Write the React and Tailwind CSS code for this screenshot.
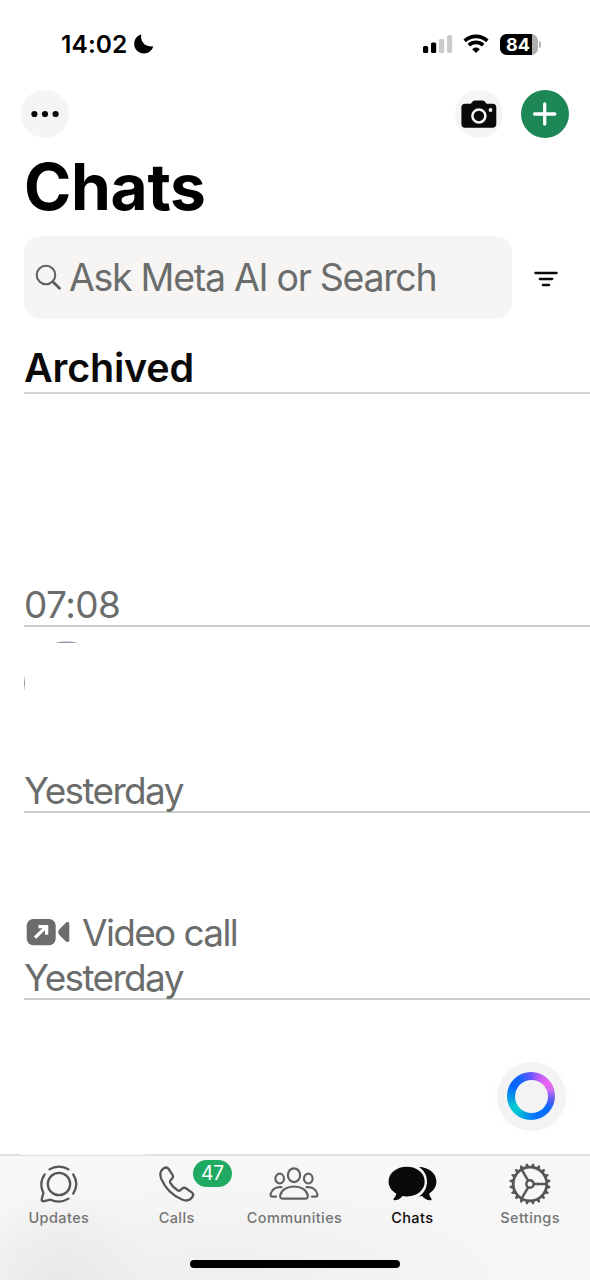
import React from "react";

function StatusBar() {
  return (
    <div className="flex h-[90px] shrink-0 items-start justify-between pl-[61px] pr-[49px] pt-[32px]">
      <div className="flex h-[24px] items-center">
        <span className="w-[73px] whitespace-nowrap text-[24.5px] font-semibold leading-[24px] tracking-[0.1px] text-black">14:02</span>
        <svg width="20" height="20" viewBox="0 0 20 20" aria-hidden="true">
          <path d="M7.2.5C6.3 6.8 9.8 13 19.3 12.6C17.8 17 14.3 19.5 10 19.5C4.4 19.5.2 15.4.2 9.8C.2 5.4 3 1.5 7.2.5Z" fill="#000" />
        </svg>
      </div>
      <div className="flex h-[24px] items-center">
        <svg width="30" height="20" viewBox="0 0 30 20" aria-hidden="true">
          <rect x="0" y="12" width="5.2" height="7" rx="1.5" />
          <rect x="8" y="8.6" width="5.2" height="10.4" rx="1.5" />
          <rect x="16" y="4.8" width="5.2" height="14.2" rx="1.5" fill="#cbcbcb" />
          <rect x="24" y="1" width="5.2" height="18" rx="1.5" fill="#cbcbcb" />
        </svg>
        <svg className="ml-[10px]" width="26" height="20" viewBox="0 0 26 20" fill="none" stroke="#000" aria-hidden="true">
          <path d="M1.7 6.8C8.2.9 17.8.9 24.3 6.8" strokeWidth="3.6" />
          <path d="M5.8 11.2C10 7.4 16 7.4 20.2 11.2" strokeWidth="3.6" />
          <path d="M9.2 15.2C11.3 13 14.7 13 16.8 15.2L13 19Z" fill="#000" stroke="none" />
        </svg>
        <div className="ml-[11px] flex h-[21px] w-[38px] items-center overflow-hidden rounded-[6.5px] bg-linear-to-r from-black from-84% to-[#aeaeae] to-84%">
          <span className="w-[36px] text-center text-[18px] font-bold leading-[21px] text-white">84</span>
        </div>
        <div className="ml-px h-[7px] w-[2px] rounded-r-full bg-[#b5b5b5]" />
      </div>
    </div>
  );
}

function Toolbar() {
  return (
    <div className="flex h-[48px] shrink-0 items-center justify-between pl-[21px] pr-[21px]">
      <button className="flex size-[48px] items-center justify-center rounded-full bg-[#f6f5f4]" aria-label="More">
        <svg width="28" height="8" viewBox="0 0 28 8">
          <circle cx="3.4" cy="4" r="3.1" fill="#0a0a0a" />
          <circle cx="14" cy="4" r="3.1" fill="#0a0a0a" />
          <circle cx="24.6" cy="4" r="3.1" fill="#0a0a0a" />
        </svg>
      </button>
      <div className="flex gap-[18px]">
        <button className="flex size-[48px] items-center justify-center rounded-full bg-[#f6f5f4]" aria-label="Camera">
          <svg width="36" height="28" viewBox="0 0 36 28">
            <path d="M4 3.7H9.2C10.8 3.7 11.2.4 14 .4H21.5C24.3.4 24.7 3.7 26.3 3.7H31.5C34 3.7 35.3 5 35.3 7.3V24C35.3 26.4 34 27.7 31.5 27.7H4C1.7 27.7.4 26.4.4 24V7.3C.4 5 1.7 3.7 4 3.7Z" fill="#0a0a0a" />
            <circle cx="17.9" cy="15.9" r="6.5" fill="none" stroke="#f6f5f4" strokeWidth="2.5" />
            <circle cx="29.5" cy="10" r="1.9" fill="#f6f5f4" />
          </svg>
        </button>
        <button className="flex size-[48px] items-center justify-center rounded-full bg-[#1d8856]" aria-label="New chat">
          <svg width="26" height="26" viewBox="0 0 26 26" stroke="#fff" strokeWidth="3.3" strokeLinecap="round">
            <path d="M12.7 2.9V23.1M2.6 13H22.8" />
          </svg>
        </button>
      </div>
    </div>
  );
}

function SearchRow() {
  return (
    <div className="mt-[15px] flex h-[83px] shrink-0 items-center">
      <div className="flex h-[83px] w-[488px] items-center rounded-[16px] bg-[#f6f5f4] pl-[11px]">
        <svg width="27" height="27" viewBox="0 0 27 27" fill="none" stroke="#5b5e5d" aria-hidden="true">
          <circle cx="11" cy="11" r="9.3" strokeWidth="2" />
          <path d="M17.8 17.8L24.5 24.2" strokeWidth="2.8" strokeLinecap="round" />
        </svg>
        <span className="ml-[7px] whitespace-nowrap text-[37.5px] leading-[46px] tracking-[-1.3px] text-[#6b6d6c]">Ask Meta AI or Search</span>
      </div>
      <svg className="ml-[22px] mt-[3px]" width="24" height="16" viewBox="0 0 24 16" stroke="#0a0a0a" strokeWidth="2.3" strokeLinecap="round" aria-hidden="true">
        <path d="M1.4 2H22.6M5.8 8H18.2M8.9 14H15.1" />
      </svg>
    </div>
  );
}

function UpdatesIcon() {
  return (
    <svg width="38" height="38" viewBox="0 0 38 38" fill="none" stroke="#555756" strokeWidth="2.3" strokeLinecap="round" strokeLinejoin="round">
      <circle cx="19" cy="19" r="11.2" />
      <path d="M9.5 4.4C15 .7 23 .7 28.5 4.4M33.2 9.4C37.1 15.4 37.1 22.6 33.2 28.6M28.5 33.6C22.5 37.4 16.5 37.4 10.5 34.7L4.2 36.2C2.5 36.6 1.4 35.6 1.8 33.9L3.4 28C.5 22 .8 15 4.7 9.4" />
    </svg>
  );
}

function CallsIcon() {
  return (
    <svg width="36" height="36" viewBox="0 0 36 36" fill="none" stroke="#555756" strokeWidth="2.3" strokeLinejoin="round">
      <path d="M4.6 2.4C6.6 1 8.3 1.2 9.6 3L13.5 8.8C14.4 10.2 14.2 11.3 13.1 12.6L11.6 14.3C10.9 15.1 10.8 15.8 11.3 16.8C13.1 19.8 15.9 22.7 18.9 24.5C19.9 25 20.6 24.9 21.4 24.2L23.1 22.7C24.4 21.6 25.6 21.5 26.9 22.3L32.7 26.4C34.4 27.6 34.6 29 33.5 30.7C31.2 34.3 27.6 35.4 23 33.5C13.9 29.7 6 21.8 2.2 12.6C.5 8 1.5 4.6 4.6 2.4Z" />
    </svg>
  );
}

function CommunitiesIcon() {
  return (
    <svg width="50" height="34" viewBox="0 0 50 34" fill="none" stroke="#606261" strokeWidth="2.2" strokeLinejoin="round" strokeLinecap="round">
      <ellipse cx="25" cy="8.2" rx="6.1" ry="6.9" />
      <ellipse cx="10.7" cy="11.6" rx="4.3" ry="4.9" />
      <ellipse cx="39.3" cy="11.6" rx="4.3" ry="4.9" />
      <path d="M14 31.7C11.8 31.7 10.9 30.6 11.2 28.5C12.2 23 17.9 19.5 25 19.5S37.8 23 38.8 28.5C39.1 30.6 38.2 31.7 36 31.7Z" />
      <path d="M7 29.7H3.6C2 29.7 1.3 28.8 1.6 27.2C2.7 22.5 7 19.5 12.4 20.2M43 29.7H46.4C48 29.7 48.7 28.8 48.4 27.2C47.3 22.5 43 19.5 37.6 20.2" />
    </svg>
  );
}

function ChatsIcon() {
  return (
    <svg width="49" height="36" viewBox="0 0 49 36" fill="#0a0a0a">
      <path d="M18.8.8C29 .8 36.7 7 36.7 15.6C36.7 24.4 29 30.4 19.2 30.4C17.4 30.4 16 30.2 14.6 29.9C12.5 32.5 9.5 34.3 6.6 34.3C5.2 34.3 5 33.2 5.9 32.3C7.4 30.7 8.1 29.3 8.2 27.5C3.6 25 .6 20.8.6 15.6C.6 7 8.6.8 18.8.8Z" />
      <path d="M30.8.9C41 1.2 48.4 7.1 48.4 15.6C48.4 20.6 45.8 24.8 41.3 27.5C41.3 29.3 41.9 30.7 43.2 32.2C44 33.2 43.7 34.3 42.2 34.3C39 34.3 36.2 32.7 34 30.1C33 30.4 31.9 30.5 30.8 30.5C36 27.4 39 22 39 15.6C39 9.3 36 4 30.8.9Z" />
    </svg>
  );
}

const TEETH = Array.from({ length: 20 }, (_, i) => i * 18);

function SettingsIcon() {
  return (
    <svg width="42" height="42" viewBox="0 0 42 42" fill="none" stroke="#555756">
      <circle cx="21" cy="21" r="16.8" strokeWidth="2.8" />
      <circle cx="21" cy="21" r="3.7" strokeWidth="2.4" />
      <path d="M25 21H37M19 17.4L12.7 6.6M19 24.6L12.7 35.4" strokeWidth="2.5" />
      {TEETH.map((angle) => (
        <path key={angle} d="M19 4L20 .8Q21 -.4 22 .8L23 4Z" fill="#555756" stroke="none" transform={`rotate(${angle + 9} 21 21)`} />
      ))}
    </svg>
  );
}

function Tab({ label, icon, active, badge }) {
  return (
    <div className="relative flex flex-1 flex-col items-center">
      <div className="flex h-[42px] items-center justify-center">{icon}</div>
      <span className={`mt-[3px] whitespace-nowrap text-[14.5px] font-medium leading-[20px] tracking-[0.4px] ${active ? "text-[#0a0a0a]" : "text-[#737574]"}`}>{label}</span>
      {badge && (
        <span className="absolute left-[75px] top-[-3px] flex h-[27px] w-[39px] items-center justify-center rounded-full bg-[#20aa61] text-[19.5px] leading-[27px] tracking-[-0.4px] text-white">{badge}</span>
      )}
    </div>
  );
}

export default function App() {
  return (
    <div className="relative flex h-[1280px] w-[590px] flex-col overflow-hidden bg-white font-['Inter',sans-serif]">
      <StatusBar />
      <Toolbar />
      <main className="flex flex-1 flex-col pl-[24px]">
        <h1 className="mt-[11px] h-[72px] whitespace-nowrap text-[64px] font-bold leading-[75px] tracking-[-0.3px] text-black">Chats</h1>
        <SearchRow />
        <section className="flex h-[75px] flex-col justify-end border-b-2 border-[#d6d6d6]">
          <h2 className="whitespace-nowrap text-[39.5px] font-semibold leading-[48px] tracking-[-0.2px] text-[#0a0a0a]">Archived</h2>
        </section>
        <section className="flex h-[233px] flex-col justify-end border-b-2 border-[#cdcdcd] text-[37px] leading-[45px] text-[#6b6d6c]">
          <span className="-mb-[2px] tracking-[-0.55px]">07:08</span>
        </section>
        <section className="flex h-[186px] flex-col justify-between border-b-2 border-[#cdcdcd] text-[37px] leading-[45px] text-[#6b6d6c]">
          <svg width="84" height="80" viewBox="0 0 84 80" fill="none" aria-hidden="true">
            <path d="M31 16Q42 13.2 54 16Z" fill="#9295a6" />
            <path d="M0 48Q1.4 56 0 65Z" fill="#555866" />
          </svg>
          <span className="-mb-[2px] tracking-[-1.65px]">Yesterday</span>
        </section>
        <section className="flex h-[187px] flex-col justify-end border-b-2 border-[#cdcdcd] text-[37px] leading-[45px] text-[#6b6d6c]">
          <div className="flex items-center">
            <svg className="mb-[2px] ml-[2px]" width="46" height="28" viewBox="0 0 46 28" aria-hidden="true">
              <rect x=".7" y="1" width="29" height="26.2" rx="6.5" fill="#6b6d6c" />
              <path d="M9 19.6L19.7 9.4M12.4 8.6H20.6V16.8" fill="none" stroke="#fff" strokeWidth="3.3" />
              <path d="M33.2 11.4L39.4 5.2C41 3.4 43.3 3.7 43.3 6V22C43.3 24.3 41 24.7 39.4 22.9L33.2 16.7C31.8 15 31.8 13 33.2 11.4Z" fill="#6b6d6c" />
            </svg>
            <span className="ml-[10px] whitespace-nowrap tracking-[-1.65px]">Video call</span>
          </div>
          <span className="-mb-[2px] tracking-[-1.65px]">Yesterday</span>
        </section>
      </main>
      <button className="absolute left-[496.5px] top-[1061.5px] flex size-[69px] items-center justify-center rounded-full bg-[#f3f3f3] shadow-[0_0_20px_rgba(0,0,0,0.015)]" aria-label="Meta AI">
        <span className="flex size-[48px] items-center justify-center rounded-full bg-[conic-gradient(from_0deg,#6557ff_0deg,#b75cf5_22deg,#e863f2_50deg,#d26af2_72deg,#5b5cf5_100deg,#0869fa_125deg,#0571ff_165deg,#0591ed_190deg,#00c5d2_220deg,#00c8d2_240deg,#0290ea_270deg,#0364fa_300deg,#1d65fc_330deg,#6557ff_360deg)]">
          <span className="size-[33px] rounded-full bg-[#f3f3f3]" />
        </span>
      </button>
      <nav className="relative flex h-[126px] shrink-0 flex-col items-center border-t-2 border-[#e0e0e0] bg-[#f7f7f7] bg-[radial-gradient(ellipse_100px_90px_at_60px_126px,#e9e8e6,transparent),radial-gradient(ellipse_330px_110px_at_220px_126px,#eeeeee,transparent)]">
        <span className="absolute left-[21px] top-[-2px] h-px w-[124px] bg-white" />
        <div className="flex h-[104px] w-[589px] self-start pt-[7px]">
          <Tab label="Updates" icon={<UpdatesIcon />} />
          <Tab label="Calls" icon={<CallsIcon />} badge="47" />
          <Tab label="Communities" icon={<CommunitiesIcon />} />
          <Tab label="Chats" icon={<ChatsIcon />} active />
          <Tab label="Settings" icon={<SettingsIcon />} />
        </div>
        <div className="h-[8px] w-[210px] rounded-full bg-black" />
      </nav>
    </div>
  );
}
